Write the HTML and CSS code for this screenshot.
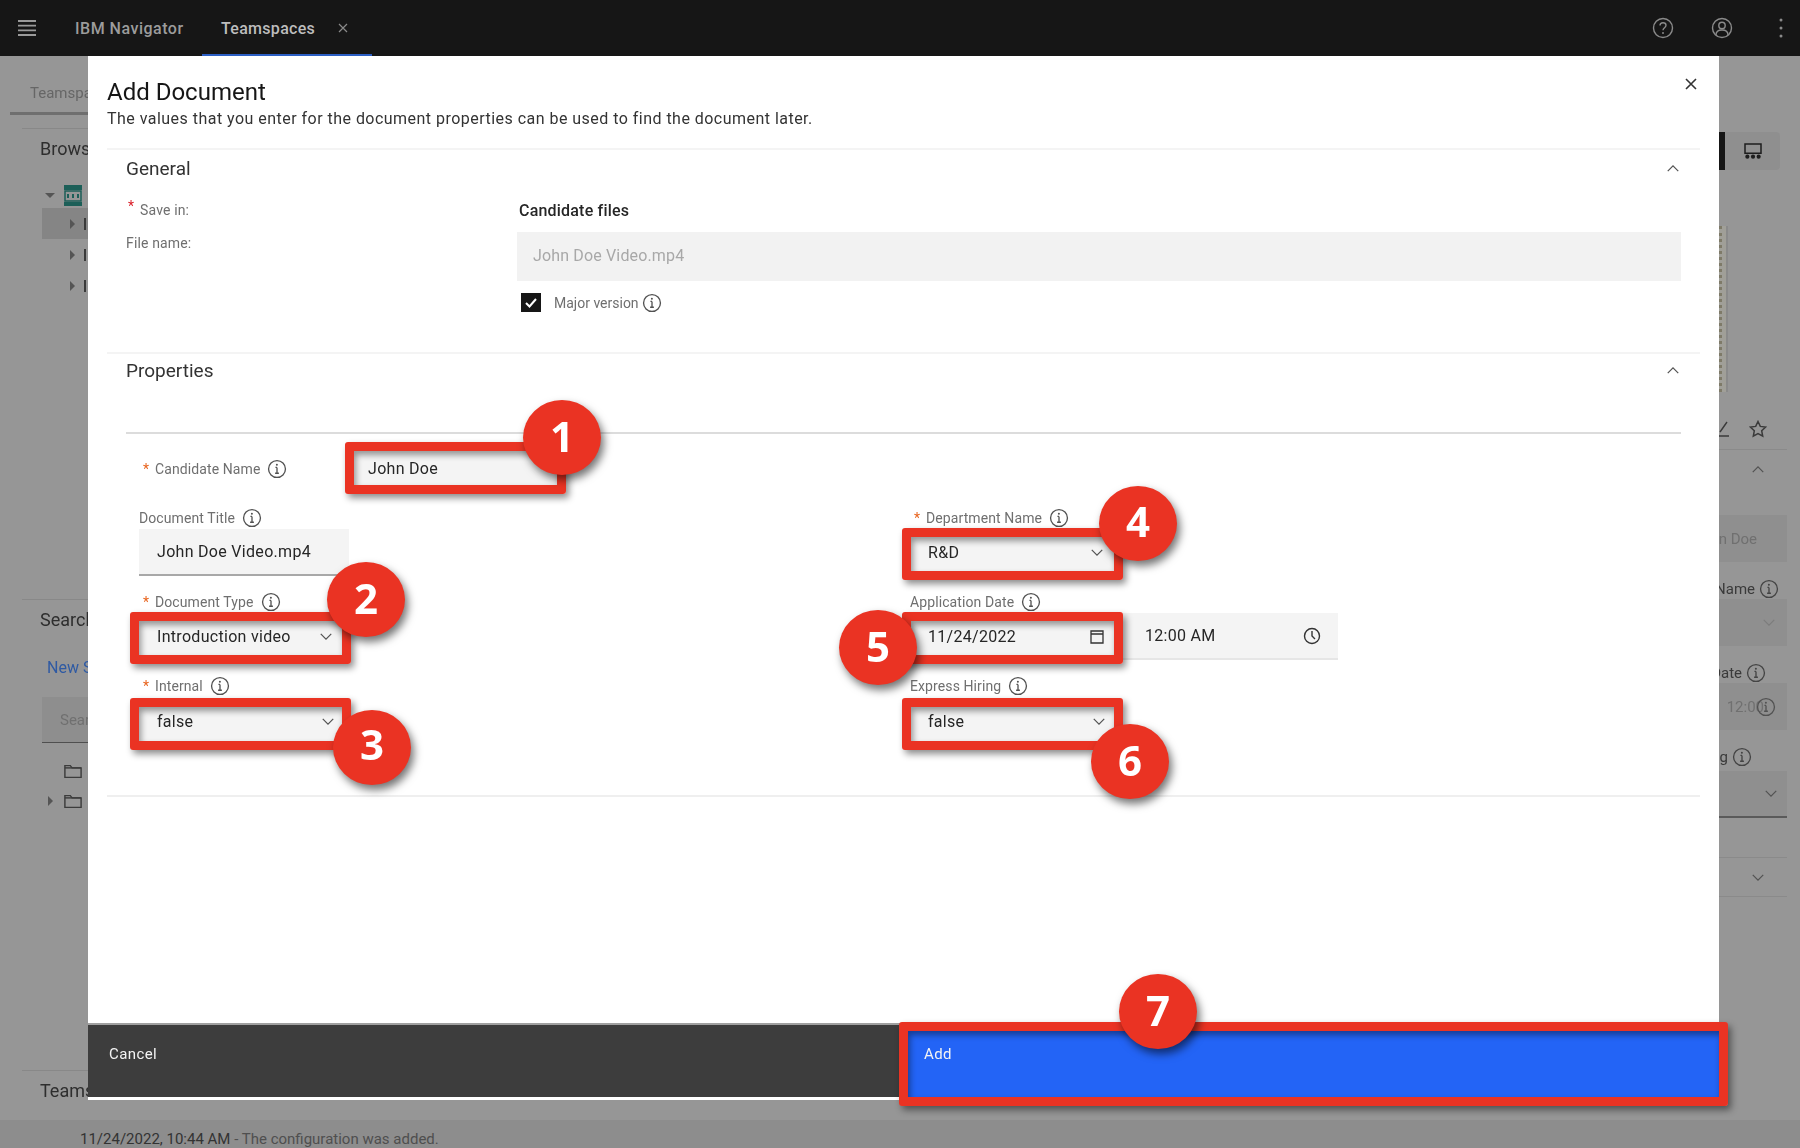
FILE: index.html
```html
<!DOCTYPE html>
<html lang="en">
<head>
    <meta charset="UTF-8">
    <meta name="viewport" content="width=device-width, initial-scale=1.0">
    <title>Add Document</title>
    <link rel="stylesheet" href="styles.css">
</head>
<body>
    <svg class="sprites" aria-hidden="true">
        <symbol id="info" viewBox="0 0 18 18">
            <circle cx="9" cy="9" r="7.6" fill="none" stroke="currentColor" stroke-width="1.2"/>
            <path d="M9 7.6v5M7.3 12.8h3.4M7.6 7.6H9" fill="none" stroke="currentColor" stroke-width="1.2"/>
            <circle cx="8.9" cy="5.2" r="0.9" fill="currentColor"/>
        </symbol>
        <symbol id="down" viewBox="0 0 16 10">
            <path d="M2 2l6 6 6-6" fill="none" stroke="currentColor" stroke-width="1.4"/>
        </symbol>
        <symbol id="up" viewBox="0 0 16 10">
            <path d="M2 8l6-6 6 6" fill="none" stroke="currentColor" stroke-width="1.4"/>
        </symbol>
        <symbol id="folder" viewBox="0 0 20 16">
            <path d="M1 14.5V1.5h6l2 2.5h10v10.5z" fill="none" stroke="currentColor" stroke-width="1.6"/>
            <path d="M1 4h18" stroke="currentColor" stroke-width="1.6"/>
        </symbol>
    </svg>

    <div class="app">
        <header class="topbar">
            <svg class="menu-icon" viewBox="0 0 18 16"><path d="M0 1h18M0 5.7h18M0 10.3h18M0 15h18" stroke="currentColor" stroke-width="1.8"/></svg>
            <span class="brand">IBM Navigator</span>
            <div class="tab">
                <span>Teamspaces</span>
                <svg class="tab-close" viewBox="0 0 10 10"><path d="M1 1l8 8M9 1l-8 8" stroke="currentColor" stroke-width="1.2"/></svg>
            </div>
            <div class="top-actions">
                <svg class="top-icon" viewBox="0 0 22 22">
                    <circle cx="11" cy="11" r="9.5" fill="none" stroke="currentColor" stroke-width="1.4"/>
                    <path d="M8 8.5C8 6.7 9.3 5.7 11 5.7s3 1 3 2.6c0 2.4-3 2.4-3 5" fill="none" stroke="currentColor" stroke-width="1.4"/>
                    <circle cx="11" cy="16" r="1" fill="currentColor"/>
                </svg>
                <svg class="top-icon" viewBox="0 0 22 22">
                    <circle cx="11" cy="11" r="9.5" fill="none" stroke="currentColor" stroke-width="1.4"/>
                    <circle cx="11" cy="8.5" r="3.2" fill="none" stroke="currentColor" stroke-width="1.4"/>
                    <path d="M5 18c0-3.6 2.4-5 6-5s6 1.400 6 5" fill="none" stroke="currentColor" stroke-width="1.4"/>
                </svg>
                <svg class="kebab" viewBox="0 0 4 20"><circle cx="2" cy="2" r="1.5" fill="currentColor"/><circle cx="2" cy="10" r="1.5" fill="currentColor"/><circle cx="2" cy="18" r="1.500" fill="currentColor"/></svg>
            </div>
        </header>

        <main class="workspace">
            <aside class="left-panel">
                <div class="left-tab">Teamspaces</div>
                <div class="left-rule"></div>
                <h2 class="left-title">Browse</h2>
                <div class="tree">
                    <div class="tree-root">
                        <span class="tri-down"></span>
                        <svg class="store-icon" viewBox="0 0 18 21">
                            <path d="M0 0h18v5H0zM0 17h18v4H0z" fill="#1c5f58"/>
                            <path d="M1 6h16v10H1z" fill="none" stroke="#1c5f58" stroke-width="1.5"/>
                            <path d="M4 9v4M9 9v4M14 9v4" stroke="#1c5f58" stroke-width="2"/>
                        </svg>
                    </div>
                    <div class="tree-row tree-row-selected"><span class="tri-right"></span><span class="tree-stub"></span></div>
                    <div class="tree-row"><span class="tri-right"></span><span class="tree-stub"></span></div>
                    <div class="tree-row"><span class="tri-right"></span><span class="tree-stub"></span></div>
                </div>
                <div class="left-rule left-rule-search"></div>
                <h2 class="left-title">Searches</h2>
                <a class="new-search">New Search</a>
                <div class="search-box">Search</div>
                <div class="folders">
                    <div class="folder-row"><svg class="folder-icon"><use href="#folder"/></svg></div>
                    <div class="folder-row"><span class="tri-right tri-small"></span><svg class="folder-icon"><use href="#folder"/></svg></div>
                </div>
                <div class="left-rule left-rule-team"></div>
                <h2 class="left-title">Teamspaces</h2>
            </aside>

            <aside class="right-panel">
                <div class="view-switch">
                    <span class="view-active"></span>
                    <span class="view-button">
                        <svg class="view-icon" viewBox="0 0 19 17">
                            <path d="M1 1h17v10H1z" fill="none" stroke="currentColor" stroke-width="1.6"/>
                            <circle cx="3.500" cy="14.500" r="2.200" fill="currentColor"/><circle cx="9.500" cy="14.500" r="2.200" fill="currentColor"/><circle cx="15.500" cy="14.500" r="2.200" fill="currentColor"/>
                        </svg>
                    </span>
                </div>
                <div class="preview-edge"></div>
                <div class="side-actions">
                    <svg class="edit-icon" viewBox="0 0 10 18"><path d="M8 2L1 12M0 16h10" fill="none" stroke="currentColor" stroke-width="1.4"/></svg>
                    <svg class="star-icon" viewBox="0 0 18 18"><path d="M9 1.500l2.300 4.900 5.300.7-3.900 3.700 1 5.300L9 13.500l-4.700 2.600 1-5.300-3.900-3.700 5.300-.7z" fill="none" stroke="currentColor" stroke-width="1.500"/></svg>
                </div>
                <div class="side-chevron"><svg class="chev"><use href="#up"/></svg></div>
                <div class="side-field side-field-first"><span class="side-value">John Doe</span></div>
                <div class="side-label"><span>Name</span><svg class="info"><use href="#info"/></svg></div>
                <div class="side-field side-field-select"><svg class="chev chev-light"><use href="#down"/></svg></div>
                <div class="side-label side-label-date"><span>Date</span><svg class="info"><use href="#info"/></svg></div>
                <div class="side-field"><span class="side-value side-time">12:00</span><svg class="info info-faint"><use href="#info"/></svg></div>
                <div class="side-label side-label-hiring"><span>Hiring</span><svg class="info"><use href="#info"/></svg></div>
                <div class="side-field side-field-active"><svg class="chev"><use href="#down"/></svg></div>
                <div class="side-more"><svg class="chev"><use href="#down"/></svg></div>
            </aside>
        </main>

        <footer class="status">
            <span class="status-time">11/24/2022, 10:44 AM</span>
            <span class="status-text">- The configuration was added.</span>
        </footer>
    </div>

    <div class="modal">
        <div class="modal-body">
            <div class="modal-head">
                <h1>Add Document</h1>
                <p>The values that you enter for the document properties can be used to find the document later.</p>
                <svg class="modal-close" viewBox="0 0 14 14"><path d="M2 2l10 10M12 2L2 12" stroke="currentColor" stroke-width="1.600"/></svg>
            </div>

            <section class="section">
                <div class="section-head">
                    <span>General</span>
                    <svg class="chev"><use href="#up"/></svg>
                </div>
                <div class="general-grid">
                    <div class="general-labels">
                        <div class="small-label"><span class="req req-top">*</span>Save in:</div>
                        <div class="small-label">File name:</div>
                    </div>
                    <div class="general-fields">
                        <div class="folder-name">Candidate files</div>
                        <div class="readonly-input">John Doe Video.mp4</div>
                        <div class="check-row">
                            <span class="checkbox">
                                <svg viewBox="0 0 20 19"><path d="M5 10l3.500 3.500L15 6" fill="none" stroke="#fff" stroke-width="2"/></svg>
                            </span>
                            <span class="small-label">Major version</span>
                            <svg class="info"><use href="#info"/></svg>
                        </div>
                    </div>
                </div>
            </section>

            <section class="section section-props">
                <div class="section-head section-head-props">
                    <span>Properties</span>
                    <svg class="chev"><use href="#up"/></svg>
                </div>
                <div class="props-rule"></div>

                <div class="name-row">
                    <label class="field-label name-label"><span class="req">*</span>Candidate Name<svg class="info"><use href="#info"/></svg></label>
                    <div class="control control-name">John Doe</div>
                </div>

                <div class="props-grid">
                    <div class="field">
                        <label class="field-label">Document Title<svg class="info"><use href="#info"/></svg></label>
                        <div class="control control-title">John Doe Video.mp4</div>
                    </div>
                    <div class="field">
                        <label class="field-label"><span class="req">*</span>Department Name<svg class="info"><use href="#info"/></svg></label>
                        <div class="control">R&amp;D<svg class="chev"><use href="#down"/></svg></div>
                    </div>
                    <div class="field">
                        <label class="field-label"><span class="req">*</span>Document Type<svg class="info"><use href="#info"/></svg></label>
                        <div class="control">Introduction video<svg class="chev"><use href="#down"/></svg></div>
                    </div>
                    <div class="field">
                        <label class="field-label">Application Date<svg class="info"><use href="#info"/></svg></label>
                        <div class="date-time">
                            <div class="control">11/24/2022
                                <svg class="field-icon" viewBox="0 0 14 14"><path d="M1 1h12v12H1zM1 4h12" fill="none" stroke="currentColor" stroke-width="1.300"/></svg>
                            </div>
                            <div class="control control-time">12:00 AM
                                <svg class="field-icon field-icon-clock" viewBox="0 0 18 18"><circle cx="9" cy="9" r="7.500" fill="none" stroke="currentColor" stroke-width="1.400"/><path d="M9 4v5l3 3" fill="none" stroke="currentColor" stroke-width="1.400"/></svg>
                            </div>
                        </div>
                    </div>
                    <div class="field field-last">
                        <label class="field-label"><span class="req">*</span>Internal<svg class="info"><use href="#info"/></svg></label>
                        <div class="control">false<svg class="chev"><use href="#down"/></svg></div>
                    </div>
                    <div class="field field-last">
                        <label class="field-label">Express Hiring<svg class="info"><use href="#info"/></svg></label>
                        <div class="control">false<svg class="chev"><use href="#down"/></svg></div>
                    </div>
                </div>
            </section>
        </div>

        <div class="modal-footer">
            <button class="btn btn-cancel" type="button">Cancel</button>
            <button class="btn btn-add" type="button">Add</button>
        </div>
    </div>

    <!-- callouts drawn over the screenshot -->
    <div class="mark mark-1"></div>
    <div class="mark mark-2"></div>
    <div class="mark mark-3"></div>
    <div class="mark mark-4"></div>
    <div class="mark mark-5"></div>
    <div class="mark mark-6"></div>
    <div class="mark mark-7"></div>
    <div class="step step-1">1</div>
    <div class="step step-2">2</div>
    <div class="step step-3">3</div>
    <div class="step step-4">4</div>
    <div class="step step-5">5</div>
    <div class="step step-6">6</div>
    <div class="step step-7">7</div>
</body>
</html>
```

FILE: styles.css
```css
* {
    box-sizing: border-box;
}
html, body {
    margin: 0;
    padding: 0;
    height: 1148px;
    overflow: hidden;
}
body {
    font-family: Roboto, "Liberation Sans", sans-serif;
    font-size: 14px;
    color: #262626;
    background: #969696;
}
h1, h2, p {
    margin: 0;
    font-weight: 400;
}
.sprites {
    display: none;
}
.app {
    display: flex;
    flex-direction: column;
    height: 1148px;
    filter: blur(0.5px);
}

/* top bar */
.topbar {
    display: flex;
    align-items: center;
    flex: 0 0 56px;
    height: 56px;
    background: #161616;
    color: #a8a8a8;
}
.menu-icon {
    width: 18px;
    height: 16px;
    margin-left: 18px;
    color: #9a9a9a;
}
.brand {
    margin-left: 39px;
    width: 127px;
    font-size: 16px;
    font-weight: 500;
    letter-spacing: 0.5px;
    color: #9c9c9c;
}
.tab {
    display: flex;
    align-items: center;
    align-self: stretch;
    width: 170px;
    padding: 2px 0 0 19px;
    border-bottom: 2px solid #2c5fc4;
    font-size: 16px;
    font-weight: 500;
    letter-spacing: 0.3px;
    color: #bdbdbd;
}
.tab-close {
    width: 10px;
    height: 10px;
    margin-left: 23px;
    color: #8a8a8a;
}
.top-actions {
    display: flex;
    align-items: center;
    margin-left: auto;
    color: #8a8a8a;
}
.top-icon {
    width: 22px;
    height: 22px;
    margin-right: 37px;
}
.kebab {
    width: 4px;
    height: 20px;
    margin-left: 9px;
    margin-right: 17px;
}

/* dimmed page behind the dialog */
.workspace {
    display: flex;
    justify-content: space-between;
    flex: 1;
    min-height: 0;
}
.left-panel {
    width: 88px;
    overflow: hidden;
    white-space: nowrap;
}
.left-tab {
    width: 200px;
    height: 59px;
    margin-left: 10px;
    padding: 28px 0 0 20px;
    border-bottom: 3px solid #6f6f6f;
    font-size: 15px;
    color: #666;
}
.left-rule {
    height: 1px;
    margin: 13px 0 0 22px;
    background: #888;
}
.left-title {
    margin: 9px 0 0 40px;
    font-size: 18px;
    line-height: 22px;
    color: #2e2e2e;
}
.tree {
    margin-top: 22px;
}
.tree-root {
    display: flex;
    align-items: center;
    height: 26px;
    padding-left: 45px;
}
.tri-down {
    width: 0;
    height: 0;
    border: 5px solid transparent;
    border-top: 5px solid #555;
    border-bottom: 0;
}
.store-icon {
    width: 18px;
    height: 21px;
    margin-left: 9px;
}
.tree-row {
    display: flex;
    align-items: center;
    height: 31px;
    margin-left: 42px;
    padding-left: 28px;
}
.tree-row-selected {
    background: #858585;
}
.tri-right {
    width: 0;
    height: 0;
    border: 5px solid transparent;
    border-left: 5px solid #555;
    border-right: 0;
}
.tree-stub {
    width: 2px;
    height: 12px;
    margin-left: 9px;
    background: #3a3a3a;
}
.left-rule-search {
    margin-top: 298px;
}
.new-search {
    display: block;
    margin: 27px 0 0 47px;
    font-size: 16px;
    line-height: 20px;
    color: #2f5aa3;
}
.search-box {
    height: 46px;
    margin: 19px 0 0 42px;
    padding: 14px 0 0 18px;
    background: #8e8e8e;
    border-bottom: 1px solid #4f4f4f;
    font-size: 15px;
    color: #707070;
}
.folders {
    margin-top: 13px;
    color: #3c3c3c;
}
.folder-row {
    display: flex;
    align-items: center;
    height: 30px;
    padding-left: 64px;
    position: relative;
}
.tri-small {
    position: absolute;
    left: 48px;
}
.folder-icon {
    width: 18px;
    height: 15px;
}
.left-rule-team {
    margin-top: 254px;
}
.right-panel {
    width: 81px;
    overflow: hidden;
    white-space: nowrap;
    font-size: 15px;
    color: #3a3a3a;
}
.view-switch {
    display: flex;
    height: 38px;
    margin-top: 76px;
}
.view-active {
    width: 6px;
    background: #161616;
}
.view-button {
    display: flex;
    align-items: center;
    justify-content: center;
    width: 55px;
    background: #8f8f8f;
    border-radius: 0 4px 4px 0;
    color: #1e1e1e;
}
.view-icon {
    width: 18px;
    height: 16px;
}
.preview-edge {
    width: 9px;
    height: 166px;
    margin-top: 56px;
    background: #a09f98;
    border-left: 3px dotted #7e7a68;
    border-right: 2px solid #8a8a8a;
}
.side-actions {
    display: flex;
    align-items: center;
    height: 40px;
    margin-top: 18px;
    border-bottom: 1px solid #8a8a8a;
    width: 68px;
    padding-bottom: 2px;
}
.edit-icon {
    width: 10px;
    height: 18px;
}
.star-icon {
    width: 18px;
    height: 18px;
    margin-left: 20px;
}
.side-chevron {
    display: flex;
    justify-content: center;
    align-items: center;
    width: 78px;
    height: 38px;
}
.chev {
    width: 14px;
    height: 9px;
    flex: none;
    color: #525252;
}
.chev-light {
    color: #7c7c7c;
}
.side-field {
    display: flex;
    align-items: center;
    justify-content: flex-end;
    width: 68px;
    height: 47px;
    margin-top: 10px;
    padding-right: 11px;
    background: #8f8f8f;
    overflow: hidden;
}
.side-field-first {
    margin-top: 27px;
}
.side-value {
    color: #707070;
    margin-right: 19px;
}
.side-time {
    margin-right: -8px;
}
.info-faint {
    color: #7c7c7c;
}
.side-label {
    display: flex;
    align-items: center;
    justify-content: flex-end;
    width: 60px;
    height: 16px;
    margin-top: 19px;
    margin-bottom: -8px;
}
.side-label .info {
    margin-left: 4px;
    color: #444;
}
.side-label-date {
    width: 47px;
}
.side-label-hiring {
    width: 33px;
    margin-bottom: -4px;
}
.side-field-active {
    padding-right: 9px;
    border-bottom: 2px solid #5a5a5a;
}
.side-more {
    display: flex;
    justify-content: center;
    align-items: center;
    width: 68px;
    height: 40px;
    margin-top: 39px;
    padding-left: 10px;
    border-top: 1px solid #8a8a8a;
    border-bottom: 1px solid #8a8a8a;
}
.status {
    flex: 0 0 28px;
    padding: 10px 0 0 80px;
    background: #8d8d8d;
    font-size: 15px;
    line-height: 18px;
    color: #333;
}
.status-text {
    color: #4f4f4f;
}

/* dialog */
.modal {
    position: absolute;
    top: 56px;
    left: 88px;
    display: flex;
    flex-direction: column;
    width: 1631px;
    height: 1044px;
    padding-bottom: 3px;
    background: #fff;
    filter: blur(0.5px);
}
.modal-body {
    flex: 1;
    padding: 0 19px;
}
.modal-head {
    position: relative;
    height: 92px;
    padding-top: 21px;
}
.modal-head h1 {
    font-size: 24px;
    line-height: 30px;
    color: #161616;
}
.modal-head p {
    margin-top: 1px;
    font-size: 16px;
    line-height: 22px;
    letter-spacing: 0.47px;
    color: #333;
}
.modal-close {
    position: absolute;
    top: 21px;
    right: 2px;
    width: 14px;
    height: 14px;
    color: #333;
}
.section {
    height: 204px;
    padding: 0 19px;
    border-top: 2px solid #f4f4f4;
}
.section-head {
    display: flex;
    align-items: center;
    justify-content: space-between;
    height: 37px;
    padding-right: 1px;
    font-size: 19px;
    color: #333;
}
.general-grid {
    display: grid;
    grid-template-columns: 391px 1164px;
    margin-top: 12px;
}
.small-label {
    position: relative;
    font-size: 14px;
    line-height: 20px;
    letter-spacing: 0.15px;
    color: #6f6f6f;
}
.general-labels {
    display: flex;
    flex-direction: column;
    gap: 14px;
}
.general-labels .small-label:first-child {
    padding-left: 14px;
    top: 1px;
}
.req {
    display: inline-block;
    width: 16px;
    padding-left: 4px;
    font-size: 14px;
    color: #e8641e;
}
.req-top {
    position: absolute;
    left: -2px;
    top: -4px;
    color: #da1e28;
}
.folder-name {
    margin-top: 2px;
    padding-left: 2px;
    font-size: 16px;
    font-weight: 500;
    line-height: 20px;
    letter-spacing: 0.2px;
    color: #262626;
}
.readonly-input {
    display: flex;
    align-items: center;
    height: 49px;
    margin-top: 11px;
    padding: 0 0 2px 16px;
    background: #f2f2f2;
    font-size: 16px;
    letter-spacing: 0.15px;
    color: #a8a8a8;
}
.check-row {
    display: flex;
    align-items: center;
    gap: 3px;
    margin: 12px 0 0 4px;
    height: 19px;
}
.check-row .small-label {
    letter-spacing: 0;
}
.checkbox {
    display: block;
    width: 20px;
    height: 19px;
    margin-right: 10px;
    background: #161616;
}
.checkbox svg {
    display: block;
    width: 20px;
    height: 19px;
}
.info {
    display: block;
    flex: none;
    width: 20px;
    height: 20px;
    color: #525252;
}
.section-props {
    height: 445px;
    border-bottom: 2px solid #efefef;
}
.section-head-props {
    height: 32px;
}
.props-rule {
    height: 2px;
    margin-top: 46px;
    background: #dcdcdc;
}
.name-row {
    display: flex;
    align-items: center;
    margin: 11px 0 0 13px;
}
.field-label {
    display: flex;
    align-items: center;
    height: 24px;
    padding-top: 2px;
    font-size: 14px;
    letter-spacing: 0.1px;
    color: #6f6f6f;
}
.field-label .info {
    margin-left: 7px;
}
.name-label {
    width: 214px;
}
.control {
    display: flex;
    align-items: center;
    justify-content: space-between;
    width: 210px;
    height: 47px;
    padding: 0 16px 0 18px;
    background: #f4f4f4;
    font-size: 16px;
    letter-spacing: 0.3px;
    color: #262626;
}
.control-name {
    width: 207px;
    height: 46px;
    padding-left: 15px;
}
.control-title {
    border-bottom: 2px solid #a8a8a8;
}
.props-grid {
    display: grid;
    grid-template-columns: 771px 771px;
    row-gap: 13px;
    margin: 14px 0 0 13px;
}
.field-last .control {
    margin-top: 1px;
}
.field-last .chev {
    margin-right: -2px;
}
.date-time {
    display: flex;
}
.control-time {
    width: 218px;
    padding: 0 17px 0 25px;
    border-bottom: 2px solid #e6e6e6;
}
.field-icon {
    flex: none;
    width: 14px;
    height: 14px;
    color: #333;
}
.field-icon-clock {
    width: 18px;
    height: 18px;
}
.modal-footer {
    display: flex;
    height: 74px;
    border-top: 2px solid #a0a0a0;
}
.btn {
    display: flex;
    align-items: flex-start;
    flex: 1;
    margin: 0;
    padding: 19px 0 0 20px;
    border: 0;
    font-family: inherit;
    font-size: 15px;
    line-height: 20px;
    letter-spacing: 0.4px;
    color: #f4f4f4;
}
.btn-cancel {
    padding-left: 21px;
    background: #3d3d3d;
}
.btn-add {
    background: #2364f6;
}

/* callouts */
.mark {
    position: absolute;
    width: 221px;
    height: 52px;
    border: 9px solid #ea3323;
    border-radius: 3px;
    box-shadow: 3px 4px 7px rgba(0, 0, 0, 0.45), inset 2px 4px 6px rgba(0, 0, 0, 0.4);
}
.mark-1 { left: 345px; top: 442px; }
.mark-2 { left: 130px; top: 612px; }
.mark-3 { left: 130px; top: 698px; }
.mark-4 { left: 902px; top: 528px; }
.mark-5 { left: 902px; top: 612px; }
.mark-6 { left: 902px; top: 698px; }
.mark-7 {
    left: 899px;
    top: 1022px;
    width: 829px;
    height: 84px;
}
.step {
    position: absolute;
    display: flex;
    align-items: center;
    justify-content: center;
    width: 78px;
    height: 75px;
    padding-bottom: 4px;
    border-radius: 50%;
    background: #ea3323;
    box-shadow: 3px 5px 8px rgba(0, 0, 0, 0.55);
    font-family: "Open Sans", sans-serif;
    font-size: 42px;
    font-weight: 700;
    color: #fff;
}
.step-1 { left: 523px; top: 400px; }
.step-2 { left: 327px; top: 562px; }
.step-3 { left: 333px; top: 710px; padding-bottom: 8px; }
.step-4 { left: 1099px; top: 486px; padding-bottom: 7px; }
.step-5 { left: 839px; top: 610px; }
.step-6 { left: 1091px; top: 724px; }
.step-7 { left: 1119px; top: 974px; }
```
